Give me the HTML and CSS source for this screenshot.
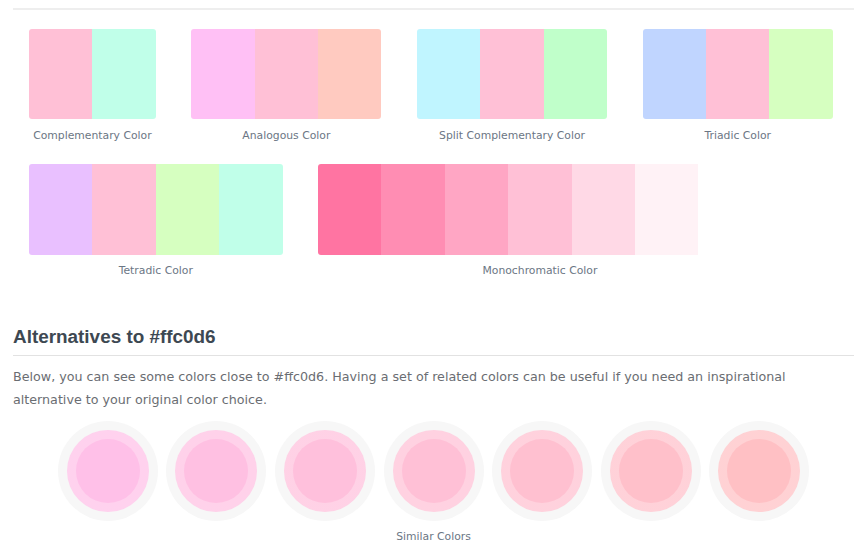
FILE: index.html
```html
<!DOCTYPE html>
<html>
<head>
<meta charset="utf-8">
<link rel="stylesheet" href="styles.css">
</head>
<body>
<div class="page">
  <div class="rule"></div>
  <div class="harmonies">
    <div class="harmony-row">
      <div class="group">
        <div class="swatches">
          <span class="sw" style="background:#ffc0d6"></span><span class="sw" style="background:#c0ffe9"></span>
        </div>
        <div class="label">Complementary Color</div>
      </div>
      <div class="group">
        <div class="swatches">
          <span class="sw" style="background:#ffc0f5"></span><span class="sw" style="background:#ffc0d6"></span><span class="sw" style="background:#ffcac0"></span>
        </div>
        <div class="label">Analogous Color</div>
      </div>
      <div class="group">
        <div class="swatches">
          <span class="sw" style="background:#c0f5ff"></span><span class="sw" style="background:#ffc0d6"></span><span class="sw" style="background:#c0ffca"></span>
        </div>
        <div class="label">Split Complementary Color</div>
      </div>
      <div class="group">
        <div class="swatches">
          <span class="sw" style="background:#c0d5ff"></span><span class="sw" style="background:#ffc0d6"></span><span class="sw" style="background:#d6ffc0"></span>
        </div>
        <div class="label">Triadic Color</div>
      </div>
    </div>
    <div class="harmony-row">
      <div class="group">
        <div class="swatches">
          <span class="sw" style="background:#e9c0ff"></span><span class="sw" style="background:#ffc0d6"></span><span class="sw" style="background:#d6ffc0"></span><span class="sw" style="background:#c0ffe9"></span>
        </div>
        <div class="label">Tetradic Color</div>
      </div>
      <div class="group">
        <div class="swatches">
          <span class="sw" style="background:#ff74a2"></span><span class="sw" style="background:#ff8db3"></span><span class="sw" style="background:#ffa6c4"></span><span class="sw" style="background:#ffc0d6"></span><span class="sw" style="background:#ffd9e6"></span><span class="sw" style="background:#fff2f6"></span><span class="sw" style="background:#ffffff"></span>
        </div>
        <div class="label">Monochromatic Color</div>
      </div>
    </div>
  </div>

  <h2 class="heading">Alternatives to #ffc0d6</h2>
  <p class="intro">Below, you can see some colors close to #ffc0d6. Having a set of related colors can be useful if you need an inspirational alternative to your original color choice.</p>

  <div class="similar">
    <div class="circles">
      <div class="circle"><div class="mid" style="--c:#ffc0e8"><div class="core"></div></div></div>
      <div class="circle"><div class="mid" style="--c:#ffc0e2"><div class="core"></div></div></div>
      <div class="circle"><div class="mid" style="--c:#ffc0dc"><div class="core"></div></div></div>
      <div class="circle"><div class="mid" style="--c:#ffc0d6"><div class="core"></div></div></div>
      <div class="circle"><div class="mid" style="--c:#ffc0d0"><div class="core"></div></div></div>
      <div class="circle"><div class="mid" style="--c:#ffc0ca"><div class="core"></div></div></div>
      <div class="circle"><div class="mid" style="--c:#ffc0c4"><div class="core"></div></div></div>
    </div>
    <div class="label">Similar Colors</div>
  </div>
</div>
</body>
</html>
```

FILE: styles.css
```css
* { box-sizing: border-box; }

html, body {
  margin: 0;
  padding: 0;
  background: #ffffff;
}

.page {
  padding: 0 13px;
  font-family: "DejaVu Sans", Verdana, sans-serif;
}

.rule {
  margin-top: 8px;
  height: 2px;
  background: #eeeeee;
}

.harmonies {
  display: flex;
  flex-direction: column;
  row-gap: 21px;
  padding-left: 16px;
  margin-top: 19px;
}

.harmony-row {
  display: flex;
  column-gap: 35.5px;
}

.group {
  display: flex;
  flex-direction: column;
}

.swatches {
  display: flex;
  height: 90px;
  border-radius: 3px;
  overflow: hidden;
}

.sw {
  display: block;
  width: 63.4px;
  height: 100%;
}

.label {
  margin-top: 10px;
  font-size: 10.8px;
  line-height: 14px;
  color: #6b7684;
  text-align: center;
}

.harmony-row + .harmony-row .swatches {
  height: 90.7px;
}

.harmony-row + .harmony-row .label {
  margin-top: 9.5px;
}

.heading {
  margin: 46.5px 0 0;
  padding-bottom: 6px;
  border-bottom: 1px solid #e2e2e2;
  font-family: "Liberation Sans", Arial, sans-serif;
  font-weight: bold;
  font-size: 18.9px;
  line-height: 24px;
  color: #3d4852;
}

.intro {
  margin: 10.5px 0 0;
  font-size: 12.7px;
  line-height: 22.5px;
  color: #6a6d72;
}

.similar {
  margin-top: 9.5px;
  display: flex;
  flex-direction: column;
  align-items: center;
}

.circles {
  display: flex;
  justify-content: center;
  gap: 8.67px;
}

.circle {
  width: 100px;
  height: 100px;
  border-radius: 50%;
  background: #f7f7f7;
  padding: 9px;
}

.mid {
  width: 100%;
  height: 100%;
  border-radius: 50%;
  padding: 9px;
  background: linear-gradient(rgba(255,255,255,0.28), rgba(255,255,255,0.28)), var(--c);
}

.core {
  width: 100%;
  height: 100%;
  border-radius: 50%;
  background: var(--c);
}

.similar .label {
  margin-top: 9px;
}
```
